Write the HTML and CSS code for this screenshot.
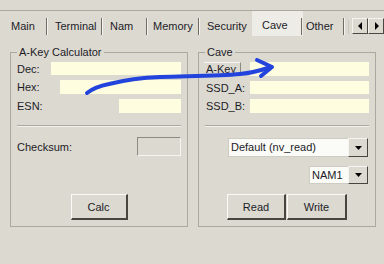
FILE: index.html
```html
<!DOCTYPE html>
<html lang="en">
<head>
  <meta charset="UTF-8">
  <title>Cave</title>
  <link rel="stylesheet" href="styles.css">
</head>
<body>
  <div class="topbar"></div>
  <nav class="tabs">
    <span class="tab t-main">Main</span>
    <span class="tab t-terminal">Terminal</span>
    <span class="tab t-nam">Nam</span>
    <span class="tab t-memory">Memory</span>
    <span class="tab t-security">Security</span>
    <span class="tab t-cave active">Cave</span>
    <span class="tab t-other">Other</span>
    <span class="tab t-cut"></span>
    <span class="scroll">
      <span class="sbtn"><svg width="5" height="8" viewBox="0 0 5 8"><path d="M4 0 L0 4 L4 8 Z" fill="#000"/></svg></span>
      <span class="sbtn"><svg width="5" height="8" viewBox="0 0 5 8"><path d="M1 0 L5 4 L1 8 Z" fill="#000"/></svg></span>
    </span>
  </nav>

  <main class="panels">
    <fieldset class="group calc">
      <legend>A-Key Calculator</legend>
      <div class="row r-dec"><span class="lbl">Dec:</span><span class="field f-dec"></span></div>
      <div class="row r-hex"><span class="lbl">Hex:</span><span class="field f-hex"></span></div>
      <div class="row r-esn"><span class="lbl">ESN:</span><span class="field f-esn"></span></div>
      <div class="sep"></div>
      <div class="row r-check"><span class="lbl">Checksum:</span><span class="sunken"></span></div>
      <div class="buttons b-calc"><span class="btn w-calc">Calc</span></div>
    </fieldset>

    <fieldset class="group cave">
      <legend>Cave</legend>
      <div class="row r-akey"><span class="akey">A-Key</span><span class="field f-wide"></span></div>
      <div class="row r-ssda"><span class="lbl">SSD_A:</span><span class="field f-wide"></span></div>
      <div class="row r-ssdb"><span class="lbl">SSD_B:</span><span class="field f-wide"></span></div>
      <div class="sep"></div>
      <div class="combo c-mode">
        <span class="combo-text">Default (nv_read)</span>
        <span class="combo-btn"><svg width="7" height="4" viewBox="0 0 7 4"><path d="M0 0 H7 L3.5 4 Z" fill="#000"/></svg></span>
      </div>
      <div class="combo c-nam">
        <span class="combo-text">NAM1</span>
        <span class="combo-btn"><svg width="7" height="4" viewBox="0 0 7 4"><path d="M0 0 H7 L3.5 4 Z" fill="#000"/></svg></span>
      </div>
      <div class="buttons b-rw">
        <span class="btn w-read">Read</span>
        <span class="btn w-write">Write</span>
      </div>
    </fieldset>
  </main>

  <!-- hand drawn note over the window -->
  <svg class="scribble" width="384" height="264" viewBox="0 0 384 264">
    <path d="M87 93 C92 89 99 86 109 84 C121 81 135 78 160 77 C190 76 220 76 240 74 C252 73 262 70 271 67"
          fill="none" stroke="#2243dc" stroke-width="4" stroke-linecap="round" stroke-linejoin="round"/>
    <path d="M257 60 L272 67 L261 76" fill="none" stroke="#2243dc" stroke-width="4"
          stroke-linecap="round" stroke-linejoin="round"/>
  </svg>
</body>
</html>
```

FILE: styles.css
```css
body {
  margin: 0;
  width: 384px;
  height: 264px;
  overflow: hidden;
  background-color: #dcd9d0;
  font-family: 'Liberation Sans', Arial, sans-serif;
  font-size: 11px;
  color: #1c1c28;
}
.topbar {
  height: 10px;
  border-bottom: 1px solid #aba89f;
}

/* tab strip */
.tabs {
  display: flex;
  height: 23px;
  margin-top: 2px;
  padding-left: 4px;
}
.tab {
  box-sizing: border-box;
  height: 23px;
  padding-top: 7px;
  white-space: nowrap;
  background:
    linear-gradient(#6f6c64, #6f6c64) right 1px top 5px / 1px 17px no-repeat,
    linear-gradient(#f4f3ef, #f4f3ef) right 0 top 5px / 1px 17px no-repeat;
}
.t-main { width: 44px; padding-left: 7px; }
.t-terminal { width: 55px; padding-left: 7px; }
.t-nam { width: 45px; padding-left: 7px; }
.t-memory { width: 52px; padding-left: 5px; }
.t-security { width: 52px; padding-left: 7px; background: none; }
.t-cave { width: 51px; padding-left: 10px; }
.t-other { width: 42px; padding-left: 3px; }
.t-cut {
  width: 7px;
  background: linear-gradient(#c9c6be, #c9c6be) left 3px top 7px / 1px 14px no-repeat;
}
.tab.active {
  margin-top: -2px;
  height: 25px;
  padding-top: 8px;
  background:
    linear-gradient(#6f6c64, #6f6c64) right 1px top 7px / 1px 17px no-repeat,
    #eeece6;
}
.scroll {
  display: flex;
  margin-top: 5px;
  height: 16px;
}
.sbtn {
  box-sizing: border-box;
  width: 16px;
  height: 16px;
  display: flex;
  align-items: center;
  justify-content: center;
  border-top: 1px solid #f4f3ef;
  border-left: 1px solid #f4f3ef;
  border-right: 1px solid #4a4840;
  border-bottom: 1px solid #4a4840;
}

/* group boxes */
.panels {
  display: flex;
  gap: 10px;
  margin-top: 10px;
  padding-left: 10px;
}
.group {
  box-sizing: border-box;
  width: 178px;
  min-width: 0;
  margin: 0;
  padding: 0 6px 6px 6px;
  border: 1px solid #aba89f;
}
.group legend {
  padding: 0 2px;
  line-height: 13px;
}
.row {
  display: flex;
  align-items: center;
}
.field {
  margin-left: auto;
  background-color: #fefde0;
}
.r-dec { margin-top: 3px; height: 13px; }
.r-hex { margin-top: 5px; height: 14px; }
.r-esn { margin-top: 5px; height: 14px; }
.r-dec .field { height: 13px; }
.r-hex .field, .r-esn .field { height: 14px; }
.f-dec { width: 130px; }
.f-hex { width: 121px; }
.f-esn { width: 62px; }
.sep {
  margin-top: 12px;
  height: 1px;
  background-color: #aba89f;
  border-bottom: 1px solid #f2f1ec;
}
.r-check { margin-top: 10px; height: 19px; }
.sunken {
  box-sizing: border-box;
  margin-left: auto;
  width: 44px;
  height: 19px;
  border-top: 1px solid #8d8a81;
  border-left: 1px solid #8d8a81;
  border-right: 1px solid #f6f5f1;
  border-bottom: 1px solid #f6f5f1;
}

/* buttons */
.buttons {
  display: flex;
  justify-content: center;
  gap: 1px;
}
.b-calc { margin-top: 38px; }
.b-rw { margin-top: 10px; }
.btn {
  box-sizing: border-box;
  height: 26px;
  display: flex;
  align-items: center;
  justify-content: center;
  border-top: 1px solid #fbfaf7;
  border-left: 1px solid #fbfaf7;
  border-right: 2px solid #47453e;
  border-bottom: 2px solid #47453e;
}
.w-calc { width: 57px; }
.w-read { width: 59px; }
.w-write { width: 60px; }

/* cave column */
.r-akey { margin-top: 3px; height: 14px; }
.r-ssda { margin-top: 5px; height: 13px; }
.r-ssdb { margin-top: 5px; height: 14px; }
.r-akey .field, .r-ssdb .field { height: 14px; }
.r-ssda .field { height: 13px; }
.f-wide { width: 119px; }
.akey {
  box-sizing: border-box;
  height: 14px;
  padding: 0 4px 0 2px;
  margin-left: -1px;
  border-top: 1px solid #f6f5f1;
  border-right: 1px solid #8d8a81;
  line-height: 13px;
}
.r-ssda .lbl, .r-ssdb .lbl { margin-left: 1px; }
.combo {
  display: flex;
  justify-content: flex-end;
  height: 19px;
  margin-right: 1px;
}
.c-mode { margin-top: 11px; }
.c-nam { margin-top: 9px; height: 18px; }
.combo-text {
  box-sizing: border-box;
  padding: 2px 0 0 2px;
  background-color: #fbfbf7;
  border: 1px solid #cfccc3;
  border-right: none;
}
.c-mode .combo-text { width: 120px; }
.c-nam .combo-text { width: 39px; }
.combo-btn {
  box-sizing: border-box;
  width: 20px;
  display: flex;
  align-items: center;
  justify-content: center;
  border-top: 1px solid #f6f5f1;
  border-left: 1px solid #f6f5f1;
  border-right: 1px solid #47453e;
  border-bottom: 1px solid #47453e;
}

.scribble {
  position: absolute;
  left: 0;
  top: 0;
  pointer-events: none;
}
```
